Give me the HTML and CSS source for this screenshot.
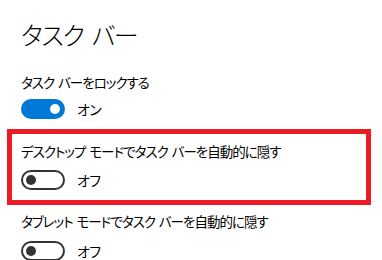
FILE: index.html
```html
<!DOCTYPE html>
<html lang="ja">
<head>
<meta charset="utf-8">
<link rel="stylesheet" href="styles.css">
</head>
<body>
<div class="page">
  <h1 class="title">タスク バー</h1>
  <div class="setting first">
    <div class="label">タスク バーをロックする</div>
    <div class="toggle-row">
      <span class="toggle on"><span class="knob"></span></span>
      <span class="state">オン</span>
    </div>
  </div>
  <div class="setting highlight">
    <div class="label">デスクトップ モードでタスク バーを自動的に隠す</div>
    <div class="toggle-row">
      <span class="toggle off"><span class="knob"></span></span>
      <span class="state">オフ</span>
    </div>
  </div>
  <div class="setting last">
    <div class="label">タブレット モードでタスク バーを自動的に隠す</div>
    <div class="toggle-row">
      <span class="toggle off"><span class="knob"></span></span>
      <span class="state">オフ</span>
    </div>
  </div>
</div>
</body>
</html>
```

FILE: styles.css
```css
html, body {
  margin: 0;
  padding: 0;
  background: #ffffff;
  overflow: hidden;
}

body {
  width: 382px;
  height: 260px;
  font-family: "Noto Sans CJK JP", "Noto Sans", sans-serif;
  font-feature-settings: "palt";
  color: #000000;
}

.page {
  display: flex;
  flex-direction: column;
  padding-top: 14px;
}

.title {
  margin: 0 0 0 21px;
  height: 40px;
  line-height: 40px;
  font-size: 25px;
  letter-spacing: -1.4px;
  word-spacing: 4px;
  font-weight: 300;
}

.setting {
  display: flex;
  flex-direction: column;
  gap: 7px;
  padding-left: 21px;
}

.setting.first {
  margin-top: 18px;
}

.label {
  height: 20px;
  line-height: 20px;
  font-size: 13.5px;
  letter-spacing: -1px;
  word-spacing: 2px;
  font-weight: 400;
  white-space: nowrap;
}

.toggle-row {
  display: flex;
  align-items: center;
  gap: 12px;
  height: 20px;
}

.state {
  font-size: 14px;
  line-height: 20px;
  letter-spacing: -0.5px;
}

.toggle {
  box-sizing: border-box;
  width: 44px;
  height: 20px;
  border-radius: 10px;
  display: flex;
  align-items: center;
  padding: 0 3px;
}

.toggle .knob {
  width: 10px;
  height: 10px;
  border-radius: 50%;
}

.toggle.on {
  background: #0078d7;
  justify-content: flex-end;
  padding: 0 5px;
}

.toggle.on .knob {
  background: #ffffff;
}

.toggle.off {
  border: 2px solid #333333;
  justify-content: flex-start;
}

.toggle.off .knob {
  background: #333333;
}

.setting.highlight {
  margin-top: 10px;
  margin-left: 7px;
  width: 364px;
  box-sizing: border-box;
  border: 5px solid #ed1c24;
  padding: 7px 0 10px 9px;
  gap: 9px;
}

.setting.last {
  margin-top: 6px;
  gap: 10px;
}
```
